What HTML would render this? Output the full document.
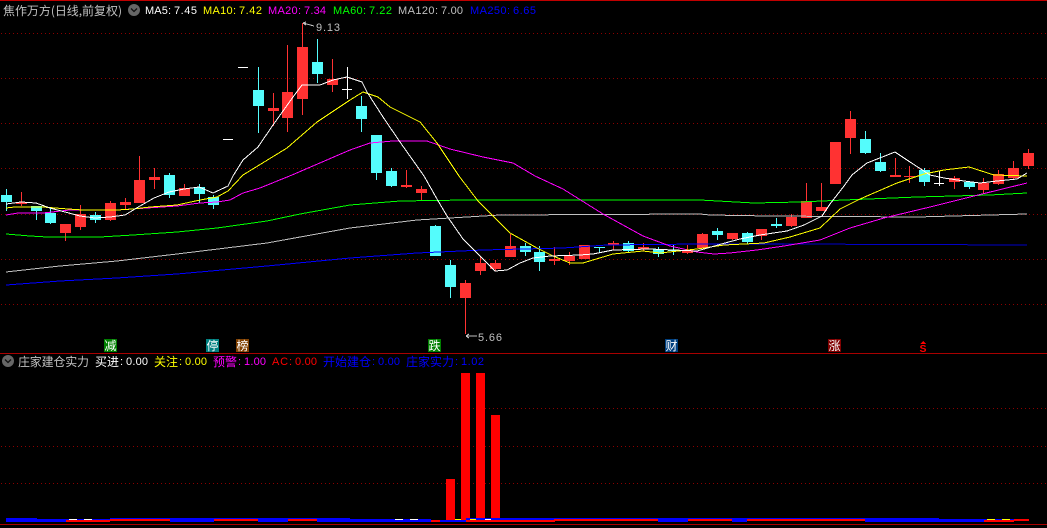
<!DOCTYPE html>
<html lang="zh"><head><meta charset="utf-8"><title>焦作万方</title>
<style>
html,body{margin:0;padding:0;background:#000;width:1047px;height:528px;overflow:hidden}
svg{display:block}
text{font-family:"Liberation Sans","WenQuanYi Zen Hei","Noto Sans CJK SC",sans-serif;font-size:11px}
text.c{font-family:"WenQuanYi Zen Hei","Noto Sans CJK SC","Liberation Sans",sans-serif;font-size:12px}
</style></head><body>
<svg width="1047" height="528" viewBox="0 0 1047 528" xmlns="http://www.w3.org/2000/svg">
<rect width="1047" height="528" fill="#000"/>
<g shape-rendering="crispEdges">
<rect x="0" y="0" width="1047" height="1" fill="#c00000"/>
<rect x="0" y="353" width="1047" height="1" fill="#a80000"/>
<rect x="0" y="524" width="1047" height="1" fill="#a80000"/>
<g stroke="#8c0000" stroke-width="1" stroke-dasharray="1 3" fill="none">
<path d="M1 33.500H1047M1 78.500H1047M1 123.500H1047M1 168.500H1047M1 214.500H1047M1 259.500H1047M1 304.500H1047M1 408.500H1047M1 446.500H1047M1 483.500H1047"/>
</g>
<!-- red candles -->
<path fill="#ff3232" d="M16 202h11v2h-11zM60 224h11v9h-11zM75 214h11v13h-11zM105 203h11v17h-11zM120 202h11v3h-11zM134 180h11v23h-11zM149 177h11v3h-11zM179 188h11v8h-11zM268 108h11v3h-11zM282 92h11v26h-11zM297 47h11v52h-11zM327 79h11v6h-11zM401 185h11v2h-11zM416 189h11v4h-11zM460 283h11v15h-11zM475 263h11v8h-11zM490 263h11v6h-11zM505 246h11v11h-11zM549 259h11v2h-11zM564 256h11v5h-11zM579 245h11v14h-11zM608 243h11v2h-11zM638 247h11v2h-11zM682 250h11v3h-11zM697 234h11v14h-11zM727 233h11v6h-11zM756 229h11v7h-11zM786 217h11v9h-11zM801 201h11v17h-11zM816 207h11v4h-11zM830 142h11v42h-11zM845 119h11v19h-11zM890 175h11v2h-11zM904 176h11v1h-11zM949 178h11v4h-11zM978 183h11v7h-11zM993 174h11v10h-11zM1008 168h11v10h-11zM1023 153h11v13h-11z"/>
<path stroke="#ff3232" stroke-width="1" fill="none" d="M21.500 192V206M65.500 224V241M80.500 205V230M110.500 201V221M125.500 198V209M139.500 156V203M154.500 168V189M184.500 184V196M273.500 93V126M287.500 45V132M302.500 23V115M332.500 59V92M406.500 170V188M421.500 186V201M465.500 280V334M480.500 256V275M495.500 260V271M510.500 234V257M554.500 247V265M569.500 252V265M584.500 245V259M613.500 241V250M643.500 243V251M687.500 245V254M702.500 233V248M732.500 233V240M761.500 229V240M791.500 214V227M806.500 183V218M821.500 183V211M850.500 111V154M895.500 158V177M909.500 166V183M954.500 176V189M983.500 178V193M998.500 170V185M1013.500 161V179M1028.500 149V169"/>
<!-- cyan candles -->
<path fill="#54fcfc" d="M1 195h11v7h-11zM31 206h11v5h-11zM45 213h11v10h-11zM90 215h11v5h-11zM164 175h11v20h-11zM194 187h11v7h-11zM208 197h11v8h-11zM253 90h11v16h-11zM312 62h11v12h-11zM356 106h11v13h-11zM371 135h11v38h-11zM386 171h11v15h-11zM430 226h11v30h-11zM445 265h11v22h-11zM520 246h11v6h-11zM534 252h11v10h-11zM594 247h11v1h-11zM623 243h11v8h-11zM653 249h11v5h-11zM668 250h11v1h-11zM712 231h11v4h-11zM742 233h11v9h-11zM771 224h11v2h-11zM860 139h11v14h-11zM875 162h11v9h-11zM919 170h11v12h-11zM964 182h11v5h-11z"/>
<path stroke="#54fcfc" stroke-width="1" fill="none" d="M6.500 189V211M36.500 206V220M50.500 208V224M95.500 212V223M169.500 173V198M199.500 184V203M213.500 195V209M258.500 67V133M317.500 39V83M361.500 96V132M376.500 135V180M391.500 168V187M435.500 225V256M450.500 260V298M525.500 243V256M539.500 246V271M599.500 247V253M628.500 241V252M658.500 247V257M673.500 245V255M717.500 228V240M747.500 232V244M776.500 218V228M865.500 131V154M880.500 153V172M924.500 168V186M969.500 182V189"/>
<!-- white doji -->
<path stroke="#fff" stroke-width="1" fill="none" d="M223 139.500H233M238 67.500H248M342 89.500H352M347.500 67V99M934 183.500H944M939.500 171V186"/>
<g fill="none" stroke-width="1">
<polyline stroke="#0000ff" points="6,285 60,281 117,278 177,274 267,266 350,258 417,253 483,250 563,248 607,245 700,244 784,244"/>
<polyline stroke="#0000c8" points="784,244 1027,245"/>
<polyline stroke="#c0c0c0" points="6,272 60,266 117,261 177,254 267,243 350,228 417,220 500,215 700,214 710,215 769,216 917,217 990,215 1027,214"/>
<polyline stroke="#00ff00" points="6,234 30,236 47,237 100,237 133,235 177,232 217,228 267,221 300,214 350,205 400,201 467,200 700,200 754,203 800,202 844,200 917,197 990,195 1027,193"/>
<polyline stroke="#ff00ff" points="6,215 18,213 43,213 70,210 117,210 147,208 177,206 200,203 217,202 230,200 243,193 260,188 292,175 350,150 370,143 393,141 427,141 450,149 483,157 513,163 535,176 563,189 603,214 643,236 670,246 697,252 714,254 730,253 757,250 784,246 820,240 850,228 884,218 930,207 974,196 1027,183"/>
<polyline stroke="#ffff00" points="6,208 15,207 43,207 68,209 83,210 117,210 133,209 150,207 177,205 200,200 217,197 228,191 243,175 287,148 317,122 350,100 363,92 378,97 390,107 420,122 437,143 459,176 478,201 510,233 537,248 553,256 570,263 583,263 613,254 643,251 660,253 697,249 724,245 764,243 790,237 820,228 840,209 860,199 897,183 924,174 944,170 969,167 994,175 1027,176"/>
<polyline stroke="#ffffff" points="6,204 21,202 36,203 50,208 65,212 80,216 95,218 110,217 125,215 140,206 154,198 169,192 184,189 199,187 213,193 228,186 233,176 243,160 258,147 273,125 293,97 302,85 320,85 333,80 347,77 362,82 367,92 383,117 400,142 424,176 437,199 447,216 463,239 475,251 495,271 507,270 520,263 533,258 550,256 580,255 593,254 613,250 650,249 697,251 725,243 740,239 760,235 787,231 804,225 822,216 830,204 844,186 852,175 867,163 895,152 910,162 930,175 944,178 964,181 980,183 997,181 1017,179 1027,173"/>
</g>
<!-- volume bars -->
<path fill="#ff0000" d="M446 479h9v41h-9zM461 373h9v147h-9zM476 373h9v147h-9zM491 415h9v105h-9z"/>
<!-- bottom strip -->
<path fill="#0000ff" d="M6 518h31v4h-31zM37 519h29v1h-29zM37 520h29v2h-29zM66 519h44v1h-44zM110 518h60v1h-60zM170 518h44v4h-44zM214 518h44v1h-44zM258 518h30v4h-30zM288 518h29v1h-29zM317 518h33v4h-33zM350 519h81v1h-81zM350 520h116v2h-116zM466 518h88v2h-88zM554 518h104v1h-104zM658 518h30v4h-30zM688 518h44v1h-44zM732 518h15v4h-15zM747 518h118v1h-118zM865 518h74v4h-74zM939 519h90v1h-90zM939 520h45v2h-45z"/>
<path fill="#ff0000" d="M66 520h44v2h-44zM110 519h60v2h-60zM214 519h44v2h-44zM288 519h29v2h-29zM431 520h9v2h-9zM466 520h89v2h-89zM554 519h104v2h-104zM688 519h44v2h-44zM747 519h118v2h-118zM984 520h30v2h-30zM1014 519h15v2h-15z"/>
<path fill="#ffffff" d="M69 519h8v1h-8zM84 519h8v1h-8zM395 519h8v1h-8zM410 519h8v1h-8zM485 519h6v1h-6z"/>
<path fill="#ffff00" d="M455 519h6v1h-6zM470 519h6v1h-6zM987 519h8v1h-8zM1002 519h8v1h-8z"/>
<!-- markers -->
<rect x="104" y="339" width="13" height="13" fill="#007f00"/>
<rect x="206" y="339" width="13" height="13" fill="#008080"/>
<rect x="236" y="339" width="13" height="13" fill="#804000"/>
<rect x="428" y="339" width="13" height="13" fill="#007f00"/>
<rect x="665" y="339" width="13" height="13" fill="#004080"/>
<rect x="828" y="339" width="13" height="13" fill="#800000"/>
<polygon points="920,344 923,341 926,344" fill="#ff0000"/>
<!-- arrows -->
<path stroke="#c0c0c0" fill="none" d="M303 23L314 26M303 23l3 -1M303 23l3 2M466 336H477M466 336l3 -2M466 336l3 2"/>
</g>
<!-- circle icons -->
<circle cx="134" cy="10" r="6" fill="#666"/>
<path d="M131 8.500l3 3 3-3" stroke="#111" stroke-width="1.300" fill="none"/>
<circle cx="8" cy="361" r="6" fill="#666"/>
<path d="M5 359.500l3 3 3-3" stroke="#111" stroke-width="1.300" fill="none"/>
<!-- header -->
<text class="c" x="3" y="15" fill="#c0c0c0" textLength="119">焦作万方(日线,前复权)</text>
<g fill="#fff"><text x="145" y="14" textLength="26">MA5:</text><text x="174" y="14" textLength="23">7.45</text></g>
<g fill="#ff0"><text x="203" y="14" textLength="33">MA10:</text><text x="239" y="14" textLength="23">7.42</text></g>
<g fill="#f0f"><text x="268" y="14" textLength="33">MA20:</text><text x="304" y="14" textLength="22">7.34</text></g>
<g fill="#0f0"><text x="333" y="14" textLength="33">MA60:</text><text x="369" y="14" textLength="23">7.22</text></g>
<g fill="#c0c0c0"><text x="398" y="14" textLength="40">MA120:</text><text x="441" y="14" textLength="22">7.00</text></g>
<g fill="#00f"><text x="470" y="14" textLength="40">MA250:</text><text x="513" y="14" textLength="23">6.65</text></g>
<text x="316" y="31" fill="#c0c0c0" textLength="24">9.13</text>
<text x="478" y="341" fill="#c0c0c0" textLength="24">5.66</text>
<!-- marker glyphs -->
<g fill="#fff">
<text class="c" x="104.500" y="350">减</text>
<text class="c" x="206.500" y="350">停</text>
<text class="c" x="236.500" y="350">榜</text>
<text class="c" x="428.500" y="350">跌</text>
<text class="c" x="665.500" y="350">财</text>
<text class="c" x="828.500" y="350">涨</text>
</g>
<text x="919.500" y="352" fill="#f00" style="font-size:10.500px;font-weight:bold">S</text>
<!-- sub header -->
<text class="c" x="18" y="366" fill="#c0c0c0" textLength="71">庄家建仓实力</text>
<g fill="#fff"><text class="c" x="95" y="366" textLength="24">买进</text><text x="120" y="365">:</text><text x="126" y="365" textLength="22">0.00</text></g>
<g fill="#ff0"><text class="c" x="154" y="366" textLength="24">关注</text><text x="179" y="365">:</text><text x="185" y="365" textLength="22">0.00</text></g>
<g fill="#f0f"><text class="c" x="213" y="366" textLength="24">预警</text><text x="238" y="365">:</text><text x="244" y="365" textLength="22">1.00</text></g>
<g fill="#f00"><text x="272" y="365" textLength="20">AC:</text><text x="295" y="365" textLength="22">0.00</text></g>
<g fill="#00f"><text class="c" x="323" y="366" textLength="48">开始建仓</text><text x="372" y="365">:</text><text x="378" y="365" textLength="22">0.00</text></g>
<g fill="#00f"><text class="c" x="406" y="366" textLength="48">庄家实力</text><text x="455" y="365">:</text><text x="461" y="365" textLength="23">1.02</text></g>
</svg>
</body></html>
